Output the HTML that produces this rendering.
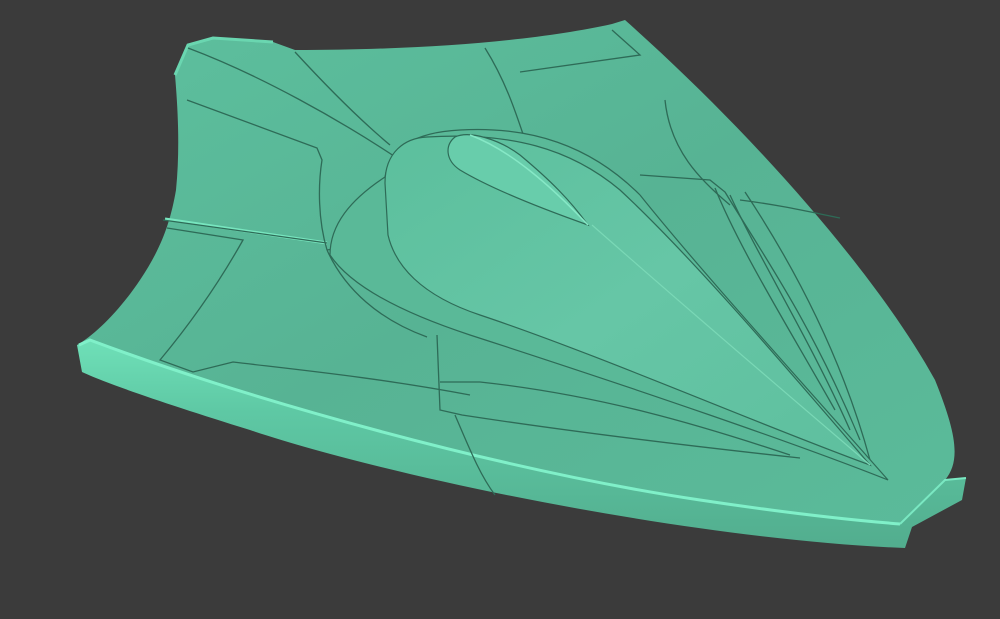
<!DOCTYPE html>
<html><head><style>
html,body{margin:0;padding:0;background:#3b3b3b;width:1000px;height:619px;overflow:hidden}
</style></head><body>
<svg width="1000" height="619" viewBox="0 0 1000 619" xmlns="http://www.w3.org/2000/svg">
<defs>
<linearGradient id="body" x1="0" y1="0" x2="1" y2="1">
<stop offset="0" stop-color="#5dc09e"/><stop offset="0.5" stop-color="#57b394"/><stop offset="1" stop-color="#5bbb9a"/>
</linearGradient>
<linearGradient id="tear" x1="0" y1="0" x2="1" y2="1">
<stop offset="0" stop-color="#5cbf9d"/><stop offset="0.5" stop-color="#66c6a6"/><stop offset="1" stop-color="#5ebf9e"/>
</linearGradient>
<linearGradient id="rim" x1="0" y1="0" x2="0" y2="1">
<stop offset="0" stop-color="#6fe0b8"/><stop offset="0.35" stop-color="#5ec8a4"/><stop offset="1" stop-color="#52ad8e"/>
</linearGradient>
</defs>
<rect width="1000" height="619" fill="#3b3b3b"/>
<!-- rim/thickness -->
<path d="M77,345 L90,340 C250,400 500,470 700,500 C780,512 850,520 900,524 L945,480 L966,478 L962,500 L912,527 L905,548 C700,540 400,480 250,430 C170,405 110,385 82,372 Z" fill="url(#rim)"/>
<!-- top surface -->
<path d="M90,340 L77,345 C95,335 120,310 140,280 C160,250 170,225 176,190 C180,150 178,110 175,75 L188,45 L213,38 L273,42 L295,50 C430,50 540,40 612,24 L625,20 C760,140 880,280 935,380 C955,430 962,460 945,480 L900,524 C850,520 780,512 700,500 C500,470 250,400 90,340 Z" fill="url(#body)"/>
<!-- rim highlight -->
<path d="M79,345 L90,340 C250,400 500,470 700,500 C780,512 850,520 900,524" fill="none" stroke="#80f0c9" stroke-width="3"/>
<path d="M900,524 L945,480 L966,478" fill="none" stroke="#7ae8c2" stroke-width="2"/>
<path d="M175,75 L188,45 L213,38 L273,42" fill="none" stroke="#6ad6b0" stroke-width="3"/>
<!-- raised band highlight -->
<path d="M165,219 L327,243" fill="none" stroke="#78e6bf" stroke-width="3"/>
<!-- panel lines -->
<g fill="none" stroke="#2e6b57" stroke-width="1.3">
<path d="M188,48 C260,75 340,120 400,160"/>
<path d="M295,52 C330,90 360,120 390,145"/>
<path d="M485,48 C505,80 515,110 525,140"/>
<path d="M612,30 L640,55 L520,72"/>
<path d="M665,100 C670,150 700,180 730,205"/>
<path d="M187,100 L317,148 L322,160 C318,185 318,220 327,250"/>
<path d="M163,220 L327,243"/>
<path d="M167,228 L243,240 C215,290 185,330 160,360 L193,372 L233,362 C300,370 380,378 470,395"/>
<path d="M327,250 L385,240 M327,250 C345,290 380,320 427,337"/>
<path d="M437,335 L440,410 L462,415 C560,430 680,445 800,458"/>
<path d="M440,382 L480,382 C600,395 700,425 790,455"/>
<path d="M455,415 C470,450 480,475 495,495"/>
<path d="M640,175 L710,180 L725,192 C760,250 810,320 860,440"/>
<path d="M715,188 C740,250 790,330 835,410"/>
<path d="M730,195 C760,260 810,340 850,430"/>
<path d="M745,192 C790,260 840,350 870,460"/>
<path d="M740,200 C780,205 810,212 840,218"/>
</g>
<!-- teardrop base -->
<path d="M385,177 C390,145 420,132 460,130 C530,126 590,145 640,195 C700,270 800,380 888,480 C800,445 640,390 470,335 C400,312 350,285 330,255 C330,225 350,200 385,177 Z" fill="#5ab998" stroke="#2e6b57" stroke-width="1.2"/>
<!-- teardrop top -->
<path d="M385,183 C385,152 405,138 427,137 C510,132 570,148 620,190 C690,255 780,360 870,465 C760,425 600,355 480,315 C420,295 395,265 388,235 Z" fill="url(#tear)" stroke="#2e6b57" stroke-width="1.2"/>
<!-- small bump -->
<path d="M455,137 C470,130 500,140 520,155 C550,180 570,200 588,225 C540,208 490,188 460,170 C445,160 445,145 455,137 Z" fill="#68cdab" stroke="#2e6b57" stroke-width="1.2"/>
<path d="M470,135 C510,150 550,185 588,225" fill="none" stroke="#86e8c6" stroke-width="1.5"/>
<path d="M592,225 C700,320 800,405 870,465" fill="none" stroke="#7ad8b6" stroke-width="1.2"/>
</svg>
</body></html>
